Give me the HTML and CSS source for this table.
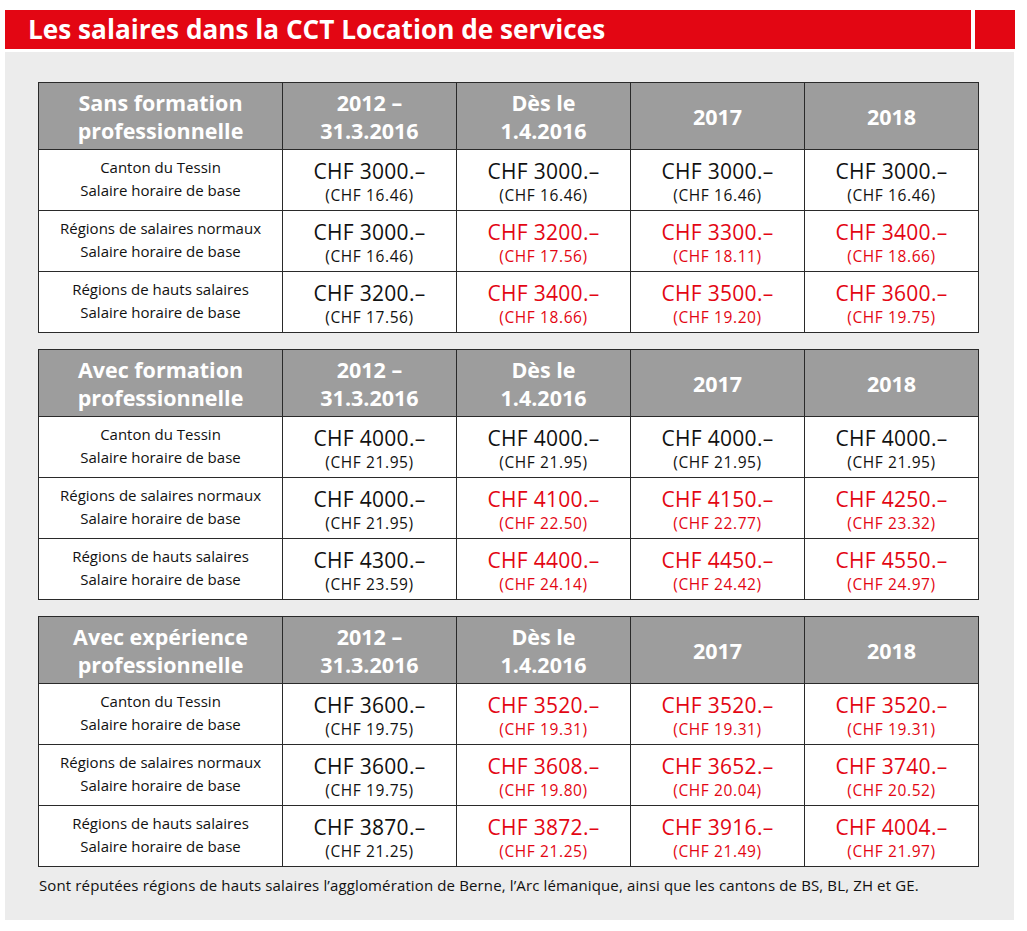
FILE: index.html
```html
<!DOCTYPE html>
<html lang="fr">
<head>
<meta charset="utf-8">
<title>Les salaires dans la CCT Location de services</title>
<link rel="stylesheet" href="styles.css">
</head>
<body>
<div class="page">
  <div class="titlebar">
    <h1 class="title">Les salaires dans la CCT Location de services</h1>
    <div class="tab"></div>
  </div>
  <div class="panel">
    <table class="sal">
      <colgroup><col class="c1"><col><col><col><col></colgroup>
      <tr class="head"><th>Sans formation<br>professionnelle</th><th>2012 –<br>31.3.2016</th><th>Dès le<br>1.4.2016</th><th>2017</th><th>2018</th></tr>
      <tr><td class="lbl">Canton du Tessin<br>Salaire horaire de base</td>
        <td><span class="m">CHF 3000.–</span><span class="h">(CHF 16.46)</span></td>
        <td><span class="m">CHF 3000.–</span><span class="h">(CHF 16.46)</span></td>
        <td><span class="m">CHF 3000.–</span><span class="h">(CHF 16.46)</span></td>
        <td><span class="m">CHF 3000.–</span><span class="h">(CHF 16.46)</span></td></tr>
      <tr><td class="lbl">Régions de salaires normaux<br>Salaire horaire de base</td>
        <td><span class="m">CHF 3000.–</span><span class="h">(CHF 16.46)</span></td>
        <td class="red"><span class="m">CHF 3200.–</span><span class="h">(CHF 17.56)</span></td>
        <td class="red"><span class="m">CHF 3300.–</span><span class="h">(CHF 18.11)</span></td>
        <td class="red"><span class="m">CHF 3400.–</span><span class="h">(CHF 18.66)</span></td></tr>
      <tr><td class="lbl">Régions de hauts salaires<br>Salaire horaire de base</td>
        <td><span class="m">CHF 3200.–</span><span class="h">(CHF 17.56)</span></td>
        <td class="red"><span class="m">CHF 3400.–</span><span class="h">(CHF 18.66)</span></td>
        <td class="red"><span class="m">CHF 3500.–</span><span class="h">(CHF 19.20)</span></td>
        <td class="red"><span class="m">CHF 3600.–</span><span class="h">(CHF 19.75)</span></td></tr>
    </table>

    <table class="sal">
      <colgroup><col class="c1"><col><col><col><col></colgroup>
      <tr class="head"><th>Avec formation<br>professionnelle</th><th>2012 –<br>31.3.2016</th><th>Dès le<br>1.4.2016</th><th>2017</th><th>2018</th></tr>
      <tr><td class="lbl">Canton du Tessin<br>Salaire horaire de base</td>
        <td><span class="m">CHF 4000.–</span><span class="h">(CHF 21.95)</span></td>
        <td><span class="m">CHF 4000.–</span><span class="h">(CHF 21.95)</span></td>
        <td><span class="m">CHF 4000.–</span><span class="h">(CHF 21.95)</span></td>
        <td><span class="m">CHF 4000.–</span><span class="h">(CHF 21.95)</span></td></tr>
      <tr><td class="lbl">Régions de salaires normaux<br>Salaire horaire de base</td>
        <td><span class="m">CHF 4000.–</span><span class="h">(CHF 21.95)</span></td>
        <td class="red"><span class="m">CHF 4100.–</span><span class="h">(CHF 22.50)</span></td>
        <td class="red"><span class="m">CHF 4150.–</span><span class="h">(CHF 22.77)</span></td>
        <td class="red"><span class="m">CHF 4250.–</span><span class="h">(CHF 23.32)</span></td></tr>
      <tr><td class="lbl">Régions de hauts salaires<br>Salaire horaire de base</td>
        <td><span class="m">CHF 4300.–</span><span class="h">(CHF 23.59)</span></td>
        <td class="red"><span class="m">CHF 4400.–</span><span class="h">(CHF 24.14)</span></td>
        <td class="red"><span class="m">CHF 4450.–</span><span class="h">(CHF 24.42)</span></td>
        <td class="red"><span class="m">CHF 4550.–</span><span class="h">(CHF 24.97)</span></td></tr>
    </table>

    <table class="sal">
      <colgroup><col class="c1"><col><col><col><col></colgroup>
      <tr class="head"><th>Avec expérience<br>professionnelle</th><th>2012 –<br>31.3.2016</th><th>Dès le<br>1.4.2016</th><th>2017</th><th>2018</th></tr>
      <tr><td class="lbl">Canton du Tessin<br>Salaire horaire de base</td>
        <td><span class="m">CHF 3600.–</span><span class="h">(CHF 19.75)</span></td>
        <td class="red"><span class="m">CHF 3520.–</span><span class="h">(CHF 19.31)</span></td>
        <td class="red"><span class="m">CHF 3520.–</span><span class="h">(CHF 19.31)</span></td>
        <td class="red"><span class="m">CHF 3520.–</span><span class="h">(CHF 19.31)</span></td></tr>
      <tr><td class="lbl">Régions de salaires normaux<br>Salaire horaire de base</td>
        <td><span class="m">CHF 3600.–</span><span class="h">(CHF 19.75)</span></td>
        <td class="red"><span class="m">CHF 3608.–</span><span class="h">(CHF 19.80)</span></td>
        <td class="red"><span class="m">CHF 3652.–</span><span class="h">(CHF 20.04)</span></td>
        <td class="red"><span class="m">CHF 3740.–</span><span class="h">(CHF 20.52)</span></td></tr>
      <tr><td class="lbl">Régions de hauts salaires<br>Salaire horaire de base</td>
        <td><span class="m">CHF 3870.–</span><span class="h">(CHF 21.25)</span></td>
        <td class="red"><span class="m">CHF 3872.–</span><span class="h">(CHF 21.25)</span></td>
        <td class="red"><span class="m">CHF 3916.–</span><span class="h">(CHF 21.49)</span></td>
        <td class="red"><span class="m">CHF 4004.–</span><span class="h">(CHF 21.97)</span></td></tr>
    </table>

    <p class="note">Sont réputées régions de hauts salaires l’agglomération de Berne, l’Arc lémanique, ainsi que les cantons de BS, BL, ZH et GE.</p>
  </div>
</div>
</body>
</html>
```
FILE: styles.css
```css
* { box-sizing: border-box; }
html, body { margin: 0; padding: 0; background: #ffffff; }
body { font-family: "Open Sans", "Noto Sans", sans-serif; color: #111; }

.page { padding: 10px 0 0 5px; width: 1027px; }

.titlebar { display: flex; gap: 4px; height: 39px; }
.title {
  margin: 0;
  width: 966px;
  height: 39px;
  background: #e30613;
  color: #fff;
  font-size: 26.2px;
  font-weight: 700;
  line-height: 39px;
  padding-left: 23px;
  letter-spacing: 0;
  white-space: nowrap;
}
.tab { width: 40px; height: 39px; background: #e30613; }

.panel {
  margin-top: 3px;
  width: 1009px;
  height: 868px;
  background: #ececec;
  padding: 30px 36px 0 33px;
  display: flex;
  flex-direction: column;
  gap: 16px;
}

.sal {
  width: 941px;
  border-collapse: collapse;
  table-layout: fixed;
  background: #fff;
  border: 1.5px solid #2a2a2a;
}
.sal col.c1 { width: 244px; }
.sal th, .sal td { border: 1px solid #2a2a2a; text-align: center; padding: 0; }

.sal .head th {
  height: 67px;
  background: #9d9d9d;
  color: #fff;
  font-size: 21.5px;
  font-weight: 700;
  line-height: 28px;
  padding-top: 2px;
}
.sal td { height: 61px; vertical-align: middle; }
.sal td.lbl { font-size: 15px; line-height: 23px; color: #111; padding-bottom: 3px; letter-spacing: 0; }
.sal td .m { display: block; font-size: 21px; line-height: 28.8px; letter-spacing: 0.3px; padding-top: 3px; }
.sal td .h { display: block; font-size: 15.5px; line-height: 21.3px; letter-spacing: 0.6px; margin-top: -1px; }
.sal td.red { color: #e30613; }

.note {
  margin: -8px 0 0 1px;
  font-size: 15px;
  color: #111;
  letter-spacing: 0.13px;
  white-space: nowrap;
}
```
